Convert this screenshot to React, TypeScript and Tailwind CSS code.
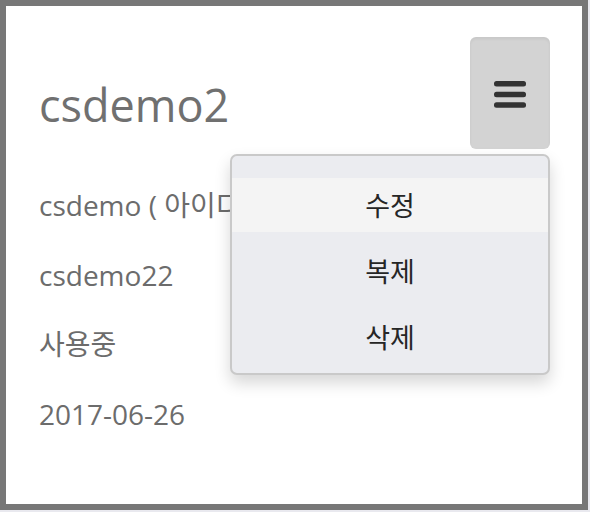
import React from "react";

const latin = "font-['Open_Sans','Noto_Sans_CJK_KR',sans-serif]";

const MenuIcon = () => (
  <svg width="32" height="27" viewBox="0 0 32 27" aria-hidden="true">
    <rect x="0" y="0" width="32" height="5.5" rx="2.5" fill="#333" />
    <rect x="0" y="10.8" width="32" height="5.5" rx="2.5" fill="#333" />
    <rect x="0" y="21.3" width="32" height="5.5" rx="2.5" fill="#333" />
  </svg>
);

const rows = ["csdemo ( 아이디 )", "csdemo22", "사용중", "2017-06-26"];
const actions = ["수정", "복제", "삭제"];

const App = () => {
  return (
    <div className="w-[590px] h-[512px] bg-[#e9e9ef] overflow-hidden">
      <div className={`w-[588px] h-[510px] bg-white border-[6px] border-[#777777] pl-[33px] pr-[32px] pt-[31px] ${latin}`}>
        {/* header */}
        <div className="flex items-start justify-between">
          <h1 className="mt-[40px] text-[45px] leading-[56px] font-normal text-[#707070]">
            csdemo2
          </h1>

          {/* menu button + dropdown */}
          <div className="relative">
            <button className="w-[80px] h-[112px] rounded-[6px] bg-[#d3d3d3] shadow-[inset_0_2px_3px_rgba(0,0,0,0.06)] flex items-center justify-center pt-[3px]">
              <MenuIcon />
            </button>

            <div className="absolute right-0 top-[117px] w-[320px] h-[221px] rounded-[7px] border-2 border-[#c9c9c9] bg-[#ebecf0] shadow-[0_8px_16px_rgba(0,0,0,0.16)] pt-[22px] flex flex-col gap-[12px] z-10">
              {actions.map((a, i) => (
                <div
                  key={a}
                  className={`h-[54px] flex items-center justify-center text-[27px] font-normal text-[#262626] font-['Noto_Sans_CJK_KR',sans-serif] ${
                    i === 0 ? "bg-[#f4f4f4]" : ""
                  }`}
                >
                  {a}
                </div>
              ))}
            </div>
          </div>
        </div>

        {/* details */}
        <ul className="mt-[22px] flex flex-col">
          {rows.map((r) => (
            <li key={r} className="text-[28px] leading-[69.5px] text-[#6c6c6c] whitespace-nowrap">
              {r}
            </li>
          ))}
        </ul>
      </div>
    </div>
  );
};

export default App;
